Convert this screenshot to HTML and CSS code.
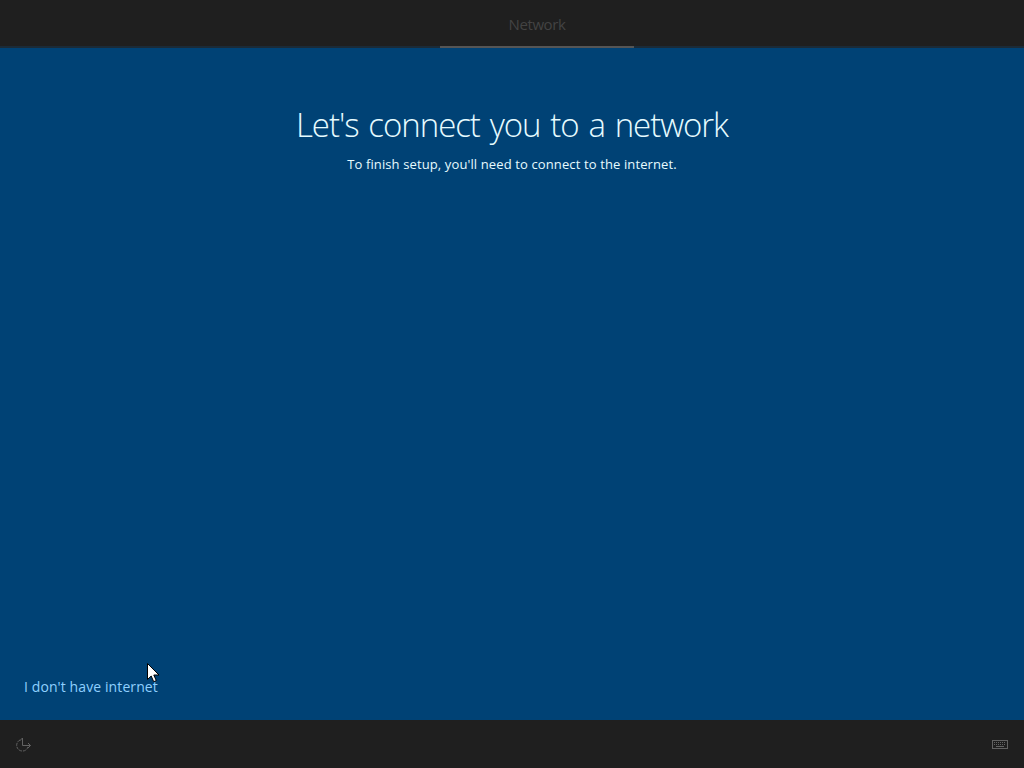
FILE: index.html
```html
<!DOCTYPE html>
<html lang="en">
<head>
  <meta charset="UTF-8">
  <meta name="viewport" content="width=device-width, initial-scale=1.0">
  <title>Network</title>
  <link rel="stylesheet" href="styles.css">
</head>
<body>

  <!-- Top bar -->
  <nav class="topbar">
    <div class="tab">Network</div>
  </nav>

  <!-- Setup page -->
  <main class="content">
    <h1>Let's connect you to a network</h1>
    <p class="subtitle">To finish setup, you'll need to connect to the internet.</p>
    <a class="skip-link" href="#">I don't have internet</a>
  </main>

  <!-- Bottom bar -->
  <footer class="bottombar">
    <svg class="access-icon" width="18" height="16" viewBox="0 0 18 16">
      <path d="M5.5 4l3-3v7.500h8M14 6l2.500 2.500-2.500 2.500" />
      <path class="dashed" d="M6 3a5.800 5.800 0 1 0 8 7" />
    </svg>
    <svg class="keyboard-icon" width="16" height="10" viewBox="0 0 16 10">
      <rect x=".5" y=".5" width="15" height="8" />
      <path class="keys" d="M2 2.500h12M2 4.500h12" />
      <path d="M4 6.500h8" />
    </svg>
  </footer>

  <svg class="cursor" width="13" height="20" viewBox="0 0 13 20">
    <path d="M.5 .5v16l3.700-3.500 2.500 5.700 2.600-1.100-2.500-5.600h5.200z" />
  </svg>

</body>
</html>
```

FILE: styles.css
```css
body {
  font-family: "Open Sans", "Noto Sans", sans-serif;
  margin: 0;
  height: 100vh;
  display: flex;
  flex-direction: column;
  background-color: #004275;
  overflow: hidden;
}
.topbar {
  height: 48px;
  padding-left: 50px;
  box-sizing: border-box;
  display: flex;
  justify-content: center;
  background: linear-gradient(#1f1f1f 46px, #1b2b38 46px);
}
.tab {
  width: 194px;
  box-sizing: border-box;
  border-bottom: 2px solid #555;
  color: #434343;
  font-size: 15px;
  letter-spacing: -0.4px;
  line-height: 49px;
  text-align: center;
}
.content {
  flex: 1;
  display: flex;
  flex-direction: column;
  align-items: center;
  color: #e6fbff;
}
h1 {
  margin: 53px 0 0;
  font-size: 33px;
  font-weight: 300;
  letter-spacing: -1.05px;
  word-spacing: 2.3px;
  line-height: 48px;
  white-space: nowrap;
}
.subtitle {
  margin: 5px 0 0;
  font-size: 13px;
  letter-spacing: 0.12px;
  line-height: 20px;
  white-space: nowrap;
}
.skip-link {
  align-self: flex-start;
  margin: auto 0 22px 24px;
  color: #8fd0ff;
  font-size: 14px;
  letter-spacing: 0.1px;
  line-height: 22px;
  text-decoration: none;
  white-space: nowrap;
}
.bottombar {
  height: 48px;
  padding: 2px 16px 0 14px;
  box-sizing: border-box;
  display: flex;
  align-items: center;
  justify-content: space-between;
  background-color: #1f1f1f;
}
.bottombar svg {
  fill: none;
  stroke: #626262;
  stroke-width: 1;
}
.access-icon .dashed {
  stroke-dasharray: 3 1;
}
.keyboard-icon .keys {
  stroke-dasharray: 1 1;
}
.cursor {
  position: absolute;
  left: 147px;
  top: 663px;
  fill: #fff;
  stroke: #000;
}
```
